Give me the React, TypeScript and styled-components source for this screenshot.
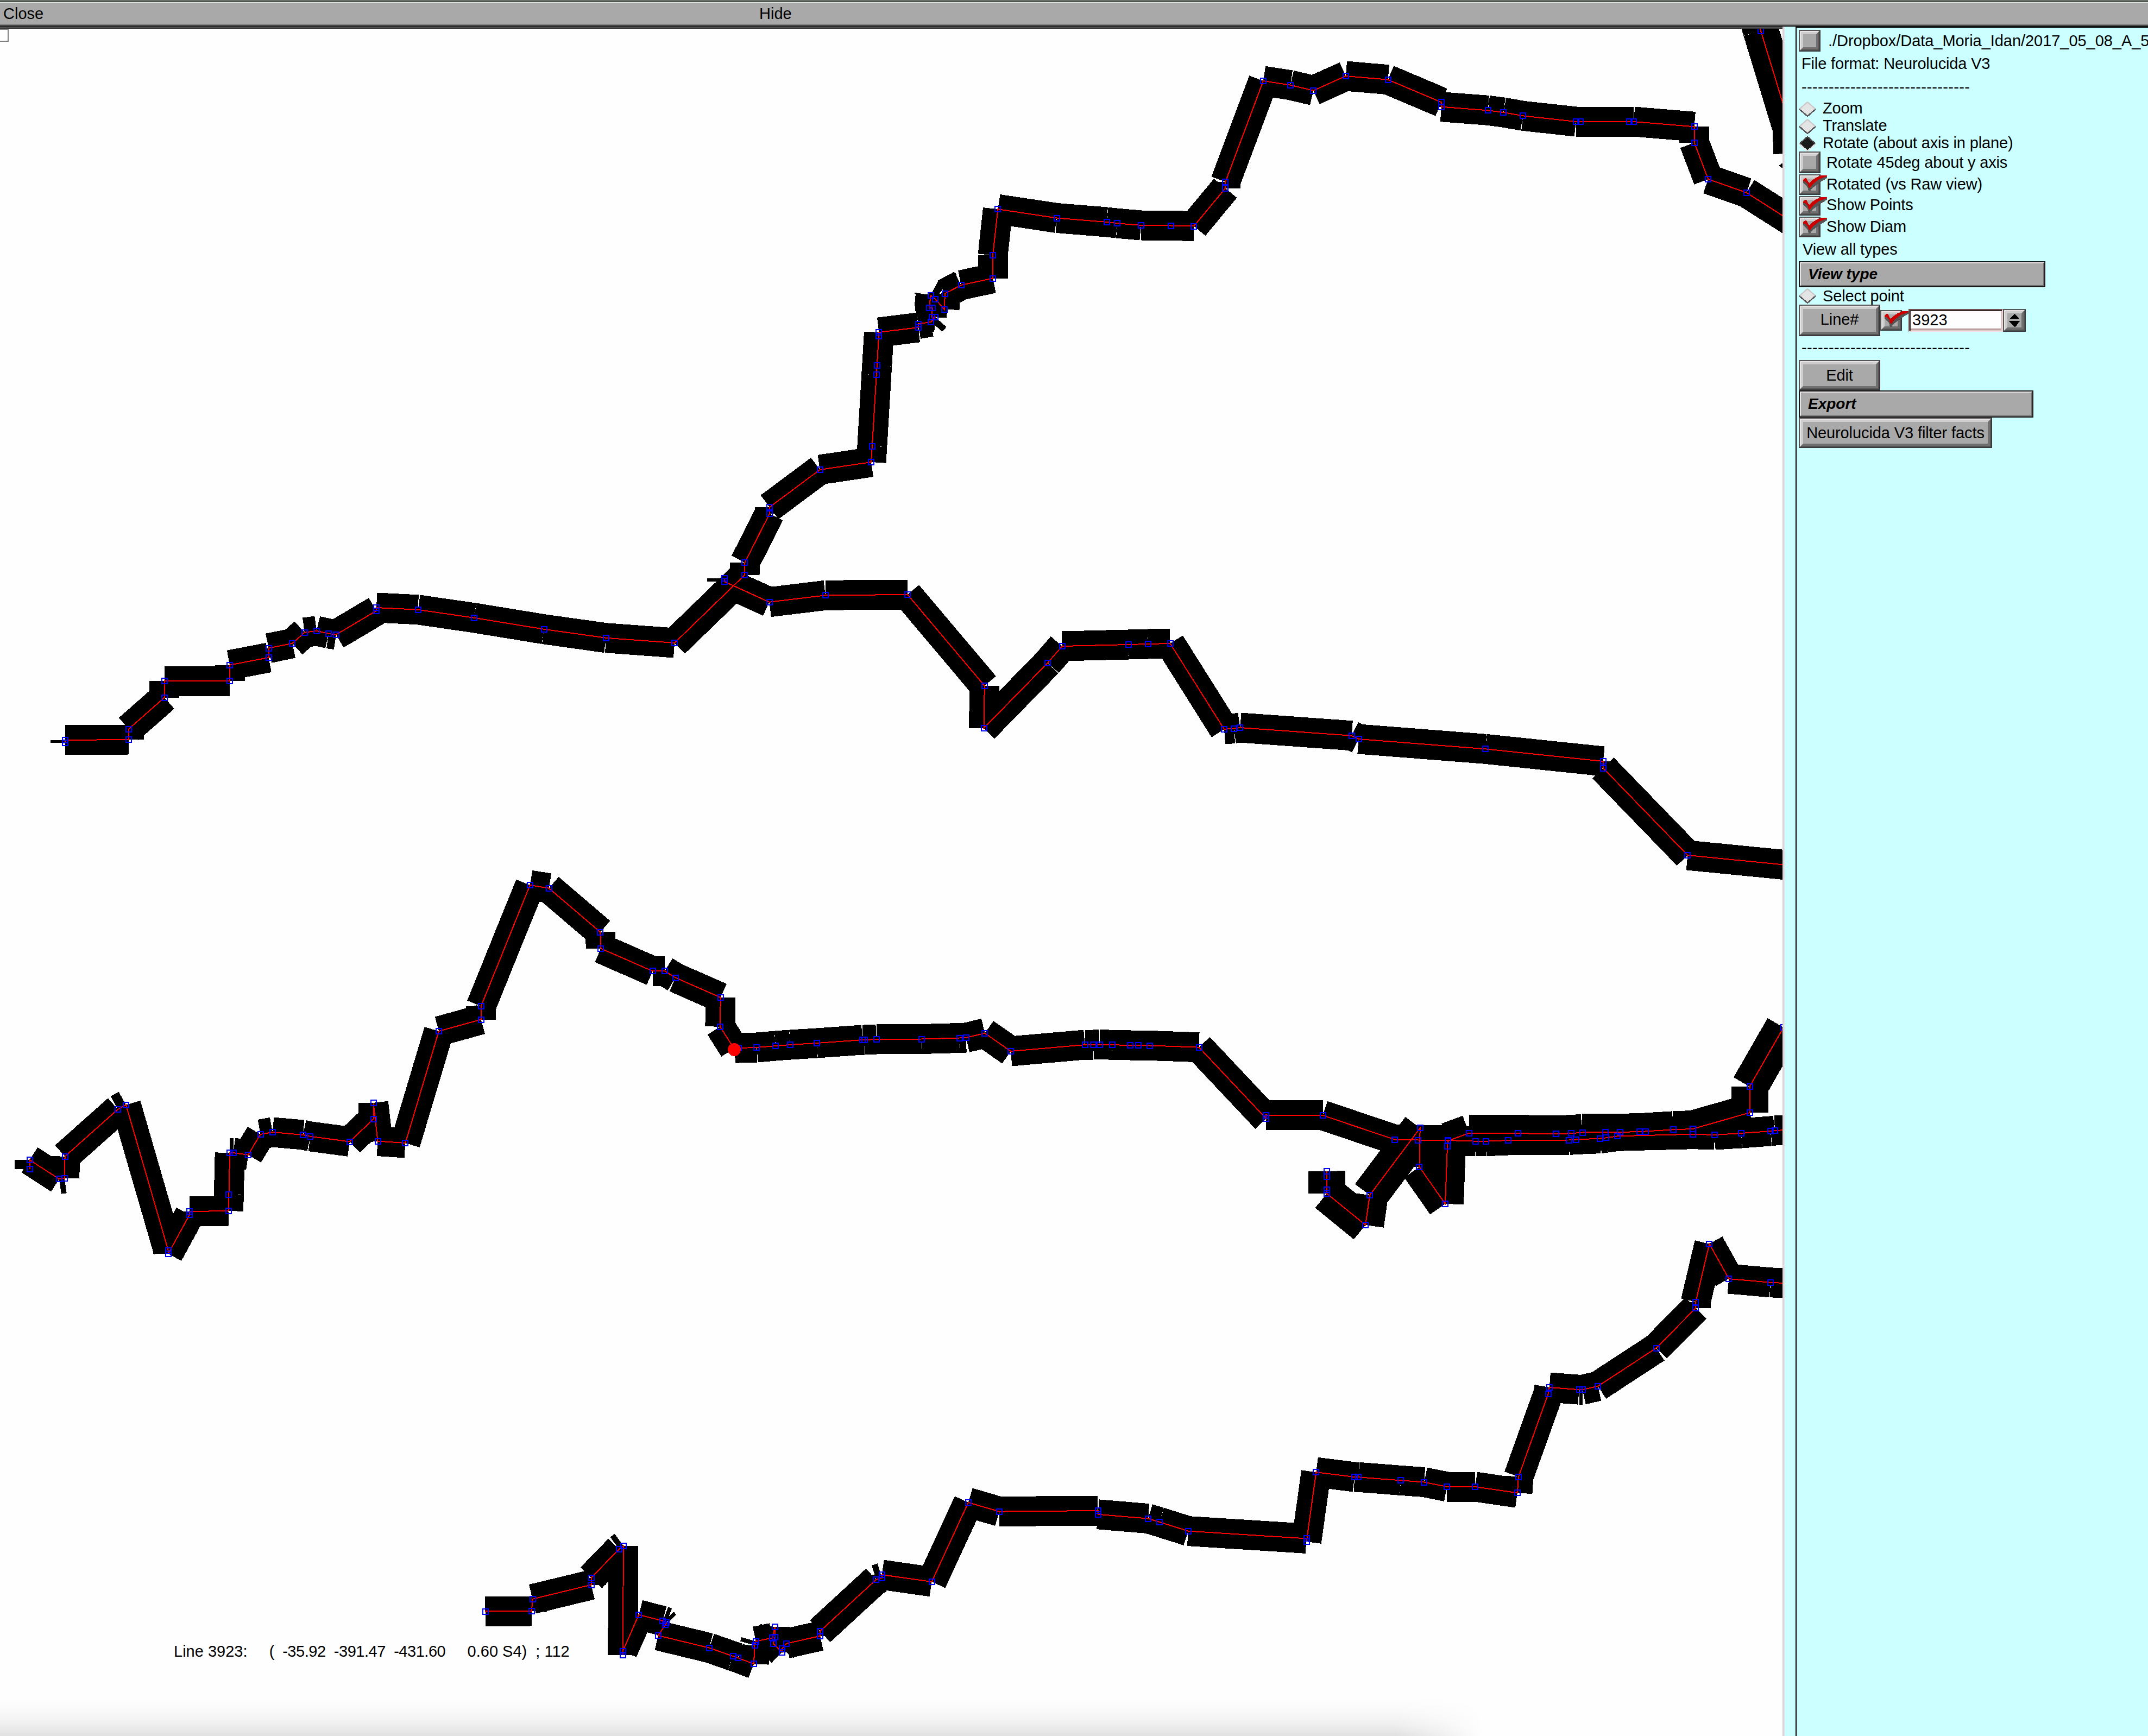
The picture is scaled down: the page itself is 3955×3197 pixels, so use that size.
import React from "react";
import styled, { createGlobalStyle, css } from "styled-components";

const GlobalStyle = createGlobalStyle`
  html, body { margin: 0; padding: 0; background: #ccffff; }
  * { box-sizing: border-box; }
`;

/* ---------- window frame ---------- */

const Window = styled.div`
  width: 3955px;
  height: 3197px;
  overflow: hidden;
  display: flex;
  flex-direction: column;
  background: #ccffff;
  color: #000;
  font-family: "Liberation Sans", Arial, Helvetica, sans-serif;
  font-size: 29px;
  line-height: 32px;
  white-space: pre;
`;

const MenuBar = styled.div`
  flex: none;
  height: 49px;
  display: flex;
  align-items: center;
  padding: 5px 0 4px;
  background: #a9a9a9;
  box-shadow: inset 0 1px #a2aaa2, inset 0 3px #1a201a, inset 0 5px #e6eae6,
    inset 0 -2px #1a1a1a, inset 0 -4px #707070;
`;

const MenuItem = styled.span<{ $width: number; $indent: number }>`
  width: ${(p) => p.$width}px;
  padding-left: ${(p) => p.$indent}px;
`;

const Body = styled.div`
  flex: 1;
  display: flex;
  min-height: 0;
`;

const Canvas = styled.div`
  position: relative;
  width: 3282px;
  border-top: 2px solid #555555;
  box-shadow: inset 0 2px #3a3737;
  background: #fefefe;
  overflow: hidden;
`;

const Drawing = styled.svg`
  display: block;
  margin-top: 2px;
`;

const Readout = styled.div`
  position: absolute;
  left: 320px;
  bottom: 140px;
`;

const Coords = styled.span`
  letter-spacing: -0.46px;
`;

const OriginBox = styled.div`
  position: absolute;
  left: -10px;
  top: 2px;
  width: 26px;
  height: 24px;
  border: 2px solid #808080;
`;

const DockShade = styled.div`
  position: absolute;
  left: 0;
  bottom: 0;
  width: 2740px;
  height: 70px;
  background: linear-gradient(
    to bottom,
    rgba(0, 0, 0, 0) 0%,
    rgba(0, 0, 0, 0.015) 30%,
    rgba(0, 0, 0, 0.05) 65%,
    rgba(0, 0, 0, 0.115) 100%
  );
  mask-image: linear-gradient(to right, #000 2570px, rgba(0, 0, 0, 0.5) 2655px, transparent 2730px);
`;

const Sash = styled.div`
  width: 24px;
  background: linear-gradient(to right, #d0d0d0 2px, #e6e0e4 2px, #e6e0e4 4px, #ccffff 4px);
`;

const Panel = styled.div`
  flex: 1;
  min-width: 0;
  overflow: hidden;
  display: flex;
  flex-direction: column;
  border-left: 2px solid #000;
  border-top: 2px solid #000;
  padding: 4px 0 0 4px;
`;

/* ---------- panel pieces ---------- */

const Row = styled.div<{ $h: number; $indent?: number }>`
  flex: none;
  display: flex;
  align-items: flex-start;
  height: ${(p) => p.$h}px;
  padding-left: ${(p) => p.$indent ?? 0}px;
`;

const Label = styled.span<{ $lift?: number; $gap?: number; $track?: number }>`
  align-self: stretch;
  display: flex;
  align-items: center;
  padding-bottom: ${(p) => p.$lift ?? 0}px;
  margin-left: ${(p) => p.$gap ?? 0}px;
  letter-spacing: ${(p) => p.$track ?? -0.15}px;
`;

const raised = css`
  position: relative;
  background: #a9a9a9;
  border: 2px solid;
  border-color: #555555 #3a3a3a #3a3a3a #555555;
  &::before {
    content: "";
    position: absolute;
    inset: 0;
    border: 2px solid;
    border-color: #e8e4e4 #555555 #555555 #e8e4e4;
  }
  &::after {
    content: "";
    position: absolute;
    inset: 2px;
    border: 4px solid;
    border-color: #cfcfcf #707070 #707070 #cfcfcf;
  }
`;

const Toggle = styled.span<{ $h: number }>`
  ${raised}
  flex: none;
  width: 40px;
  height: ${(p) => p.$h}px;
`;

const Button = styled.div<{ $w: number; $h: number; $lift?: number }>`
  ${raised}
  flex: none;
  display: flex;
  align-items: center;
  justify-content: center;
  width: ${(p) => p.$w}px;
  height: ${(p) => p.$h}px;
  padding-bottom: ${(p) => p.$lift ?? 0}px;
  letter-spacing: -0.1px;
`;

const MenuButton = styled.div<{ $w: number; $h: number; $indent: number }>`
  flex: none;
  position: relative;
  display: flex;
  align-items: center;
  width: ${(p) => p.$w}px;
  height: ${(p) => p.$h}px;
  padding-left: ${(p) => p.$indent}px;
  background: #a9a9a9;
  border: 2px solid #1a1a1a;
  font-size: 28px;
  font-weight: bold;
  font-style: italic;
  &::before {
    content: "";
    position: absolute;
    inset: 0;
    border: 2px solid;
    border-color: #e8e4e4 #707070 #707070 #e8e4e4;
  }
`;

const CheckSvg = styled.svg`
  position: absolute;
  left: -2px;
  top: -2px;
  z-index: 1;
  overflow: visible;
`;

const DiamondSvg = styled.svg<{ $top: number }>`
  flex: none;
  margin-top: ${(p) => p.$top}px;
`;

const LineRow = styled.div`
  flex: none;
  display: flex;
  align-items: center;
  height: 58px;
`;

const Field = styled.div`
  width: 174px;
  height: 42px;
  margin-left: 12px;
  padding: 0 0 3px 5px;
  display: flex;
  align-items: center;
  background: #fefefe;
  border: 2px solid;
  border-color: #705050 #ead8d8 #f0e0e0 #705050;
  box-shadow: inset 2px 2px #3a2a2a, inset -2px -2px #dcc4c4, inset 0 -4px #b09090;
`;

const Spinner = styled.div`
  ${raised}
  width: 42px;
  height: 42px;
`;

const ArrowsSvg = styled.svg`
  position: absolute;
  left: 9px;
  top: 7px;
  z-index: 1;
`;

const Check = () => (
  <CheckSvg width={54} height={36} viewBox="0 0 54 36" shapeRendering="crispEdges">
    <path
      d="M8 13 L14 12 L20 20 L28 13 L38 7 L44 5 L52 3 L52 7 L42 13 L32 20 L24 26 L21 31 L18 31 L16 23 L8 16 Z"
      fill="#555555"
    />
    <path
      d="M8 10 L11 7 L14 7 L17 13 L19 16 L22 13 L26 10 L32 6 L37 4 L41 2 L52 2 L51 4 L46 6 L40 8 L35 11 L30 15 L26 18 L23 22 L20 26 L18 24 L17 19 L14 15 L11 13 L8 13 Z"
      fill="#cc0000"
    />
  </CheckSvg>
);

const Diamond = ({ on, top = 4 }: { on?: boolean; top?: number }) => (
  <DiamondSvg $top={top} width={32} height={28} viewBox="0 0 32 28" shapeRendering="crispEdges">
    <path d="M16 1 L31 14 L16 27 L1 14 Z" fill={on ? "#1a1a1a" : "#e4e4e4"} />
    <path d="M1 14 L16 1 L31 14" fill="none" stroke={on ? "#444444" : "#cccccc"} strokeWidth={2.6} />
    <path d="M1 14 L16 27 L31 14" fill="none" stroke={on ? "#e0e0e0" : "#555555"} strokeWidth={2.4} />
  </DiamondSvg>
);

const Radio = ({ text, on }: { text: string; on?: boolean }) => (
  <Row $h={32}>
    <Diamond on={on} />
    <Label $gap={12}>{text}</Label>
  </Row>
);

const CheckRow = ({
  h, box, text, lift, on,
}: { h: number; box: number; text: string; lift: number; on?: boolean }) => (
  <Row $h={h}>
    <Toggle $h={box}>{on && <Check />}</Toggle>
    <Label $gap={11} $lift={lift}>{text}</Label>
  </Row>
);

/* ---------- neuron tracing ---------- */

type Pt = [number, number];
type Branch = { diam: number; pts: Pt[] };

const branches: Branch[] = [
  { diam: 55, pts: [
    [120, 1368], [120, 1363], [237, 1362], [237, 1342.5], [302.7, 1284.6], [302.7, 1254], [423, 1254],
    [423, 1224.7], [494.6, 1211], [494.6, 1193.7], [538.4, 1184.8], [560.7, 1164.8], [583, 1161.8],
    [605, 1166.8], [618.8, 1168.8], [693, 1124.8], [693, 1119], [769.6, 1122.8], [873, 1137.8],
    [1001.8, 1158.8], [1116, 1174.8], [1242, 1184], [1371, 1059], [1371.4, 1036], [1417, 946],
    [1417, 934], [1509.6, 865], [1604, 851], [1605.9, 821.5], [1613.7, 690.4], [1614.8, 673],
    [1618, 619.4], [1618.4, 612], [1690.7, 603], [1690.7, 596.6], [1714.3, 592.8], [1722, 584],
    [1715.6, 583.6], [1716.8, 566.8], [1711, 566.8], [1713.6, 544], [1722, 550.5], [1739, 570],
    [1739.8, 540.8], [1769.8, 525], [1828, 512.6], [1828, 470.3], [1837.4, 385.2], [1945.8, 401.5],
    [2037.6, 409], [2057.4, 411.2], [2100.8, 415], [2155.6, 415.5], [2198.3, 416.5], [2256.3, 346.7],
    [2256.3, 335], [2326, 149], [2375.9, 156.7], [2418.4, 166.7], [2477.8, 140], [2555.6, 146.7],
    [2653.9, 188.3], [2653.9, 196.7], [2739.7, 203.3], [2768.3, 207], [2804.2, 213.3], [2901.7, 224],
    [2909.8, 224], [3000, 224], [3008, 224], [3119.6, 233.3], [3119.6, 262.7], [3145.2, 330],
    [3215.6, 354.7], [3347.6, 438.7],
  ] },
  { diam: 55, pts: [
    [1333.5, 1065], [1333.5, 1071], [1416.5, 1108.8], [1519.8, 1096.3], [1671, 1095], [1812.8, 1263],
    [1811.5, 1341], [1928.8, 1221], [1955.6, 1190], [2078, 1187], [2113.8, 1186], [2154.6, 1185],
    [2254, 1343], [2272, 1341.6], [2283.4, 1340], [2488.8, 1354.8], [2501.5, 1361], [2735, 1379.3],
    [2951.8, 1402], [2951.8, 1414.5], [3107.4, 1575], [3330, 1597],
  ] },
  { diam: 66, pts: [[3224, -4], [3242, 56.7], [3297, 237], [3298, 283]] },
  { diam: 55, pts: [
    [54.5, 2153], [54.5, 2136], [109, 2171.4], [118.8, 2170], [119.6, 2129.7], [217, 2043],
    [232, 2034.7], [309.8, 2302.7], [309.8, 2309], [349, 2237], [349, 2231], [420.5, 2230],
    [421.4, 2200], [423.2, 2123], [429.5, 2123], [457, 2126.8], [479.5, 2089], [501.8, 2085],
    [558, 2090], [571.4, 2092.8], [643.8, 2102.5], [687.5, 2061], [687.5, 2030.8],
  ] },
  { diam: 55, pts: [
    [687.5, 2030.8], [695.5, 2101.6], [746.4, 2105], [808, 1899], [885.7, 1877.6], [885.7, 1853],
    [975.9, 1630], [1010.7, 1635.7], [1105.4, 1716.7], [1106.3, 1746.7], [1201.8, 1788.4],
    [1224, 1788.4], [1243.8, 1800.5], [1326.8, 1837], [1325.9, 1890.7], [1351.5, 1931], [1360, 1930],
    [1393.4, 1929], [1428, 1926], [1455, 1924], [1504, 1921], [1588, 1915], [1592, 1915], [1613.7, 1914],
    [1697.4, 1913.5], [1767, 1911.5], [1778.6, 1911], [1813.4, 1902.7], [1861, 1936], [1997.6, 1924],
    [2013, 1924], [2024.6, 1923.5], [2047.8, 1924.2], [2081.3, 1925], [2095.5, 1925], [2117.4, 1925.5],
    [2207.6, 1928.7], [2331.3, 2060], [2331.3, 2053.5], [2435.6, 2054], [2568.3, 2098.7],
    [2610.8, 2099.5], [2666.2, 2100], [2716.5, 2101.7], [2735.8, 2101.7], [2777, 2100], [2889, 2099.5],
    [2902, 2098.5], [2945.8, 2096.7], [2957.4, 2095.3], [2978, 2092.3], [3117, 2088.7], [3157, 2090],
    [3206, 2087], [3260, 2083], [3268, 2082], [3330, 2079],
  ] },
  { diam: 68, pts: [
    [2442.6, 2156.7], [2442.7, 2166.7], [2443, 2190.7], [2443, 2198], [2514.2, 2256], [2522, 2201],
    [2614.7, 2077.3], [2613.4, 2149], [2661, 2217], [2665, 2110.7], [2666, 2101], [2704.9, 2086.7],
    [2795, 2087.3], [2864.6, 2088], [2893, 2087.3], [2913.6, 2085.5], [2956, 2085], [2983, 2085],
    [3019, 2084], [3029.5, 2083.5], [3081, 2080.3], [3117, 2079], [3221.5, 2049], [3221.5, 2001],
    [3284, 1892],
  ] },
  { diam: 55, pts: [
    [893.5, 2967.5], [979, 2967], [980.5, 2944.8], [1088.5, 2918.6], [1088.5, 2905.7], [1139.7, 2853],
    [1148, 2847], [1146.7, 3047.7], [1146.7, 3040.7], [1176.2, 2973.7], [1220.4, 2985],
    [1227.4, 2987.7], [1225.3, 2992], [1212, 3012], [1306, 3034.8], [1349.5, 3050], [1358.6, 3053],
    [1388, 3064.4], [1389.5, 3030], [1391.6, 3022.6], [1422.4, 3016.3], [1426.6, 2996.4],
    [1426.6, 3014.6], [1423.8, 3026.8], [1440, 3042.5], [1440, 3036], [1447.7, 3026.8], [1510, 3012.8],
    [1510, 3004], [1613.2, 2909], [1623.8, 2905.7], [1623.8, 2900], [1715.5, 2913], [1783, 2767],
    [1840, 2783.6], [2021.5, 2782], [2021.5, 2788.8], [2114, 2796.6], [2135, 2803], [2187.7, 2819.6],
    [2405.5, 2833.4], [2405.5, 2839], [2423.4, 2711.2], [2494, 2720], [2501.3, 2720.3],
    [2579.2, 2726.4], [2622.3, 2729.5], [2664.4, 2738], [2716, 2738], [2793.9, 2749.3], [2796, 2719.5],
    [2850.7, 2566.6], [2852.8, 2555], [2907.5, 2559.2], [2913.8, 2559.2], [2942.2, 2552.8],
    [3049.6, 2482.5], [3122.2, 2409], [3122.2, 2397.6], [3147.4, 2290.6], [3183.2, 2355],
    [3260, 2361.8], [3330, 2365],
  ] },
];

const Neuron = () => (
  <Drawing width={3282} height={3144} viewBox="0 53 3282 3144" shapeRendering="crispEdges">
    <g stroke="#000">
      {branches.map((b, i) =>
        b.pts.slice(1).map(([x, y], j) => {
          const [px, py] = b.pts[j];
          return <line key={`${i}-${j}`} x1={px} y1={py} x2={x} y2={y} strokeWidth={b.diam} />;
        })
      )}
      <line x1={1302} y1={1067.5} x2={1334} y2={1067.5} strokeWidth={6} />
      <line x1={1684} y1={540} x2={1712} y2={544} strokeWidth={2} />
      <line x1={1685} y1={559} x2={1716} y2={559} strokeWidth={28} />
      <line x1={1720} y1={539} x2={1730} y2={520} strokeWidth={7} />
      <line x1={1727} y1={519} x2={1760} y2={504} strokeWidth={4} />
      <line x1={1229} y1={2984} x2={1243} y2={2971} strokeWidth={7} />
      <path d="M3276 305 L3282 301 L3282 309 Z" />
    </g>
    <g fill="none" stroke="#f00" strokeWidth={2}>
      {branches.map((b, i) => (
        <polyline key={i} points={b.pts.map((p) => p.join(",")).join(" ")} />
      ))}
    </g>
    <g fill="none" stroke="#00f" strokeWidth={2}>
      {branches.map((b, i) =>
        b.pts.map(([x, y], j) => (
          <rect key={`${i}-${j}`} x={Math.round(x) - 5} y={Math.round(y) - 5} width={10} height={10} />
        ))
      )}
    </g>
    <circle cx={1352} cy={1933} r={12} fill="#f00" />
  </Drawing>
);

const rule = "-".repeat(31);

export default function App() {
  return (
    <Window>
      <GlobalStyle />
      <MenuBar>
        <MenuItem $width={1398} $indent={6}>Close</MenuItem>
        <MenuItem $width={200} $indent={0}>Hide</MenuItem>
      </MenuBar>
      <Body>
        <Canvas>
          <Neuron />
          <OriginBox />
          <Readout>
            {"Line 3923:     "}
            <Coords>{"(  -35.92  -391.47  -431.60"}</Coords>
            {"     0.60 S4)  ; 112"}
          </Readout>
          <DockShade />
        </Canvas>
        <Sash />
        <Panel>
          <Row $h={40}>
            <Toggle $h={40} />
            <Label $gap={14} $track={-0.05}>./Dropbox/Data_Moria_Idan/2017_05_08_A_5</Label>
          </Row>
          <Row $h={44} $indent={5}><Label>File format: Neurolucida V3</Label></Row>
          <Row $h={44} $indent={5}><Label $lift={2} $track={0.35}>{rule}</Label></Row>
          <Radio text="Zoom" />
          <Radio text="Translate" />
          <Radio text="Rotate (about axis in plane)" on />
          <CheckRow h={42} box={40} text="Rotate 45deg about y axis" lift={3} />
          <CheckRow h={40} box={38} text="Rotated (vs Raw view)" lift={5} on />
          <CheckRow h={38} box={36} text="Show Points" lift={7} on />
          <CheckRow h={38} box={38} text="Show Diam" lift={3} on />
          <Row $h={44} $indent={7}><Label $lift={1}>View all types</Label></Row>
          <MenuButton $w={454} $h={48} $indent={15}>View type</MenuButton>
          <Row $h={32}>
            <Diamond top={2} />
            <Label $gap={12}>Select point</Label>
          </Row>
          <LineRow>
            <Button $w={150} $h={58} $lift={4}>Line#</Button>
            <Toggle $h={38}><Check /></Toggle>
            <Field>3923</Field>
            <Spinner>
              <ArrowsSvg width={20} height={26} viewBox="0 0 20 26" shapeRendering="crispEdges">
                <path d="M10 0 L19 9 H1 Z M0 13 H20 L11 25 Z" fill="#000" />
              </ArrowsSvg>
            </Spinner>
          </LineRow>
          <Row $h={44} $indent={5}><Label $lift={2} $track={0.35}>{rule}</Label></Row>
          <Button $w={150} $h={56}>Edit</Button>
          <MenuButton $w={432} $h={50} $indent={15}>Export</MenuButton>
          <Button $w={356} $h={56}>Neurolucida V3 filter facts</Button>
        </Panel>
      </Body>
    </Window>
  );
}
